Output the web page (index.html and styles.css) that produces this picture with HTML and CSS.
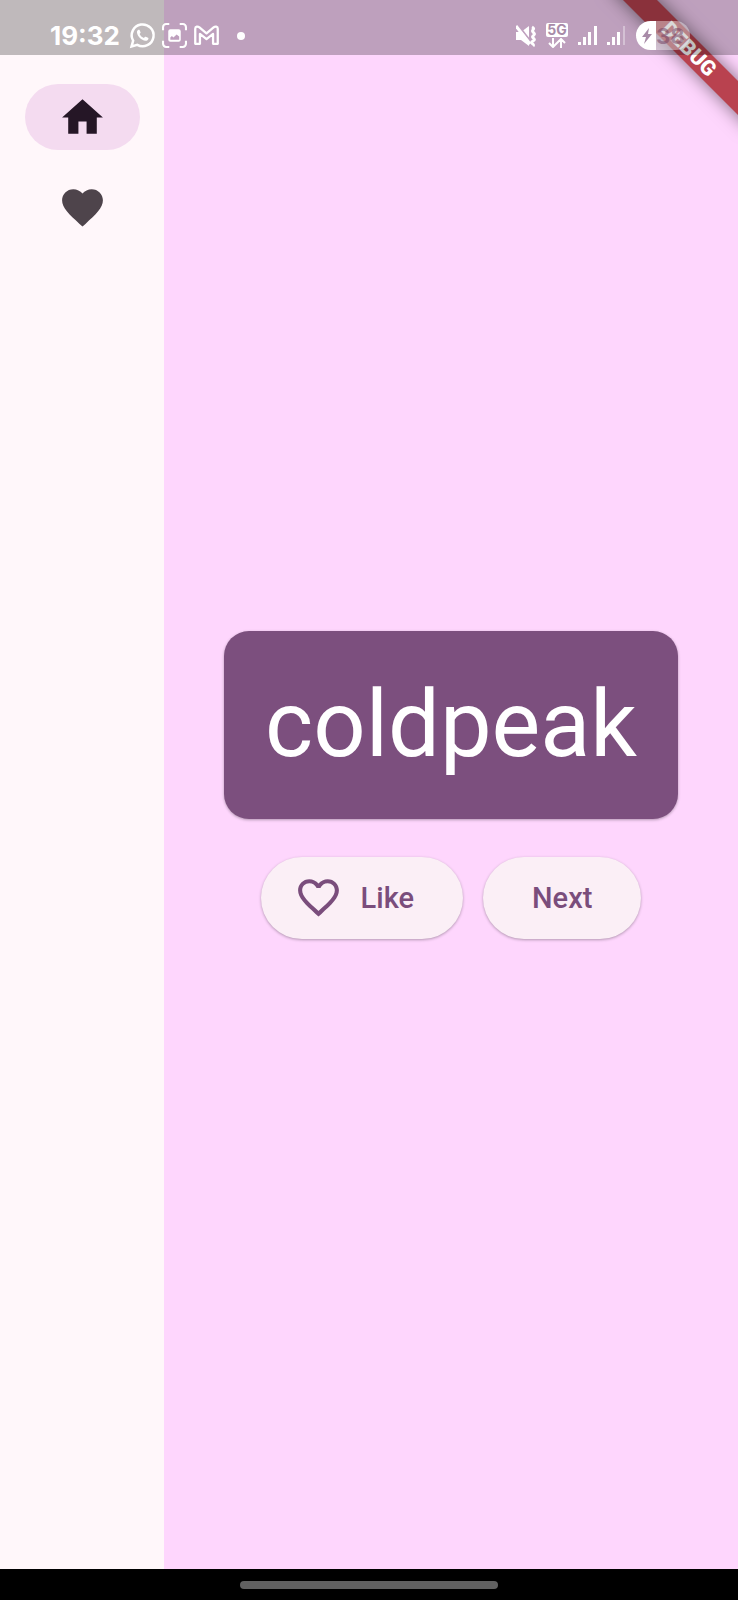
FILE: index.html
```html
<!DOCTYPE html>
<html lang="en">
<head>
<meta charset="utf-8">
<meta name="viewport" content="width=device-width, initial-scale=1">
<title>Name generator</title>
<link rel="stylesheet" href="styles.css">
</head>
<body>
<div class="screen">
  <div class="app">
    <nav class="rail" aria-label="Main">
      <button class="rail-item rail-item-active" type="button" aria-label="Home">
        <svg class="icon" viewBox="0 0 24 24"><path d="M10 20v-6h4v6h5v-8h3L12 3 2 12h3v8z"/></svg>
      </button>
      <button class="rail-item" type="button" aria-label="Favorites">
        <svg class="icon" viewBox="0 0 24 24"><path d="M12 21.35l-1.45-1.32C5.4 15.36 2 12.28 2 8.5 2 5.42 4.42 3 7.5 3c1.74 0 3.41.81 4.5 2.09C13.09 3.81 14.76 3 16.5 3 19.58 3 22 5.42 22 8.5c0 3.78-3.4 6.86-8.55 11.54L12 21.35z"/></svg>
      </button>
    </nav>
    <main class="page">
      <h1 class="word-card">coldpeak</h1>
      <div class="actions">
        <button class="action action-like" type="button">
          <svg class="icon" viewBox="0 0 24 24"><path d="M16.5 3c-1.74 0-3.41.81-4.5 2.09C10.91 3.81 9.24 3 7.5 3 4.42 3 2 5.42 2 8.5c0 3.78 3.4 6.86 8.55 11.54L12 21.35l1.45-1.32C18.6 15.36 22 12.28 22 8.5 22 5.42 19.58 3 16.5 3zm-4.4 15.55l-.1.1-.1-.1C7.14 14.24 4 11.39 4 8.5 4 6.5 5.5 5 7.5 5c1.54 0 3.04.99 3.57 2.36h1.87C13.46 5.99 14.96 5 16.5 5c2 0 3.5 1.5 3.5 3.5 0 2.89-3.14 5.74-7.9 10.05z"/></svg>
          Like
        </button>
        <button class="action" type="button">Next</button>
      </div>
    </main>
  </div>
  <div class="ribbon-corner"><div class="ribbon">DEBUG</div></div>
  <header class="status">
    <div class="status-group">
      <span class="clock">19:32</span>
      <svg class="glyph" viewBox="0 0 24 24"><path d="M1.500 22.500l1.500-5.500A10.500 10.500 0 1 1 7 21z" fill="none" stroke="#fff" stroke-width="2.400"/><path d="M8.300 6.500c-.9.2-1.800 1.300-1.600 2.700.5 3.800 4.300 7.400 8.100 7.900 1.500.1 2.700-.9 2.900-2.100.1-.4-.1-.6-.4-.8l-2.200-1c-.4-.2-.7 0-.9.3l-.8 1c-2-.8-3.300-2.100-4.200-3.900l.8-1c.2-.2.2-.5.1-.8l-.9-2c-.2-.3-.5-.4-.9-.3z" fill="#fff"/></svg>
      <svg class="glyph" viewBox="0 0 24 24"><path d="M1 7V4a3 3 0 0 1 3-3h3M17 1h3a3 3 0 0 1 3 3v3M23 17v3a3 3 0 0 1-3 3h-3M7 23H4a3 3 0 0 1-3-3v-3" fill="none" stroke="#fff" stroke-width="2"/><path fill-rule="evenodd" d="M8 6h8a2 2 0 0 1 2 2v8a2 2 0 0 1-2 2H8a2 2 0 0 1-2-2V8a2 2 0 0 1 2-2zM8 16h8.500v-3l-2.500-2-3 3-1.500-1.500L8 14z" fill="#fff"/></svg>
      <svg class="glyph" viewBox="0 0 24 24"><path d="M1.200 20V5.500c0-2.500 2.500-2.500 4-1.200l6.800 5.700 6.800-5.700c1.500-1.300 4-1.300 4 1.200V20h-4.500v-9.500L12 15.500l-6.300-5V20z" fill="none" stroke="#fff" stroke-width="2.200" stroke-linejoin="round"/></svg>
      <span class="dot"></span>
    </div>
    <div class="status-group status-right">
      <svg class="glyph-mute" viewBox="0 0 20 22"><path d="M0 7h5l8-6v20l-8-6H0z" fill="#fff"/><path d="M2 0l14 18" stroke="#bfa0be" stroke-width="2"/><path d="M0 1l14 18" stroke="#fff" stroke-width="3"/><path d="M16 2c4 2-1 3 1 5s2 2 0 4 4 3 0 5 2 3 0 5" fill="none" stroke="#fff" stroke-width="3"/></svg>
      <div class="network">
        <span class="network-label">5G</span>
        <svg class="network-arrows" viewBox="0 0 18 10"><path d="M5 0v9M1 5l4 4 4-4M13 10V1M9 5l4-4 4 4" fill="none" stroke="#fff" stroke-width="2"/></svg>
      </div>
      <svg class="glyph-signal" viewBox="0 0 19 21"><path d="M0 17h3v3H0zM5 12h3v8H5zM10 7h3v13h-3zM16 1h3v19h-3z" fill="#fff"/></svg>
      <svg class="glyph-signal" viewBox="0 0 19 21"><path d="M0 17h3v3H0zM5 12h3v8H5zM10 7h3v13h-3z" fill="#fff"/><path d="M16 1h2v19h-2z" fill="#fff" opacity=".35"/></svg>
      <div class="battery"><svg class="bolt" viewBox="0 0 12 18"><path d="M8 1L1 10h4l-2 7 8-10H7z"/></svg><span>38</span></div>
    </div>
  </header>
  <footer class="gesture"><div class="gesture-bar"></div></footer>
</div>
</body>
</html>
```

FILE: styles.css
```css
* { box-sizing: border-box; }
body { margin: 0; font-family: Roboto, sans-serif; }
button { border: 0; padding: 0; margin: 0; font: inherit; cursor: pointer; }

.screen { position: relative; display: flex; flex-direction: column; min-height: 100vh; overflow: hidden; }
.app { flex: 1; display: flex; }

.rail { width: 164px; padding-top: 84px; display: flex; flex-direction: column; align-items: center; gap: 24px; background: #fff7fa; }
.rail-item { width: 115px; height: 66px; display: flex; align-items: center; justify-content: center; border-radius: 33px; background: transparent; color: #4e444b; }
.rail-item-active { background: #f4dbf0; color: #251626; }
.icon { width: 49px; height: 49px; fill: currentColor; }

.page { flex: 1; display: flex; flex-direction: column; align-items: center; justify-content: center; gap: 38px; background: #fed6fd; }
.word-card { margin: 0; padding: 41px; border-radius: 25px; background: #7c4f7e; color: #fff; font-size: 92px; line-height: 106px; font-weight: 400; box-shadow: 0 1px 3px rgba(0, 0, 0, .3); }
.actions { display: flex; gap: 20px; }
.action { height: 82px; padding: 0 49px; display: flex; align-items: center; gap: 18px; border-radius: 41px; background: #fbeff6; color: #7a4d7c; font-size: 29px; font-weight: 500; box-shadow: 0 1px 3px rgba(0, 0, 0, .3); }
.action-like { padding-left: 33px; }

.status { position: absolute; top: 0; left: 0; right: 0; height: 55px; padding: 16px 48px 0 50px; display: flex; justify-content: space-between; background: rgba(0, 0, 0, .25); color: #fff; }
.status-group { display: flex; align-items: center; gap: 7px; }
.status-right { gap: 10px; }
.clock { margin-right: 3px; font-family: Inter, sans-serif; font-size: 26px; font-weight: 700; }
.glyph { width: 25px; height: 25px; overflow: visible; }
.dot { width: 8px; height: 8px; margin-left: 11px; border-radius: 50%; background: #fff; }
.glyph-mute { width: 20px; height: 22px; }
.network { display: flex; flex-direction: column; align-items: center; gap: 1px; }
.network-label { width: 22px; border-radius: 2px; background: #fff; color: #a88ba8; font-family: Inter, sans-serif; font-size: 14px; line-height: 14px; font-weight: 700; text-align: center; }
.network-arrows { width: 18px; height: 10px; }
.glyph-signal { width: 19px; height: 21px; }
.battery { width: 54px; height: 29px; display: flex; align-items: center; gap: 3px; padding-left: 5px; border-radius: 15px; background: linear-gradient(90deg, #fff 20px, rgba(255, 255, 255, .4) 20px); color: rgba(110, 60, 95, .5); font-family: Inter, sans-serif; font-size: 22px; font-weight: 700; }
.bolt { width: 12px; height: 18px; fill: #a88ba8; }

.ribbon-corner { position: absolute; top: 0; right: 0; width: 180px; height: 180px; overflow: hidden; }
.ribbon { position: absolute; top: 37px; left: 31px; width: 200px; height: 24px; transform: rotate(45deg); background: #b9424f; color: #fff; font-size: 21px; line-height: 24px; font-weight: 900; text-align: center; box-shadow: 0 0 18px rgba(0, 0, 0, .5); }

.gesture { height: 31px; display: flex; align-items: center; justify-content: center; background: #000; }
.gesture-bar { width: 35%; height: 8px; border-radius: 4px; background: #616161; }
```
